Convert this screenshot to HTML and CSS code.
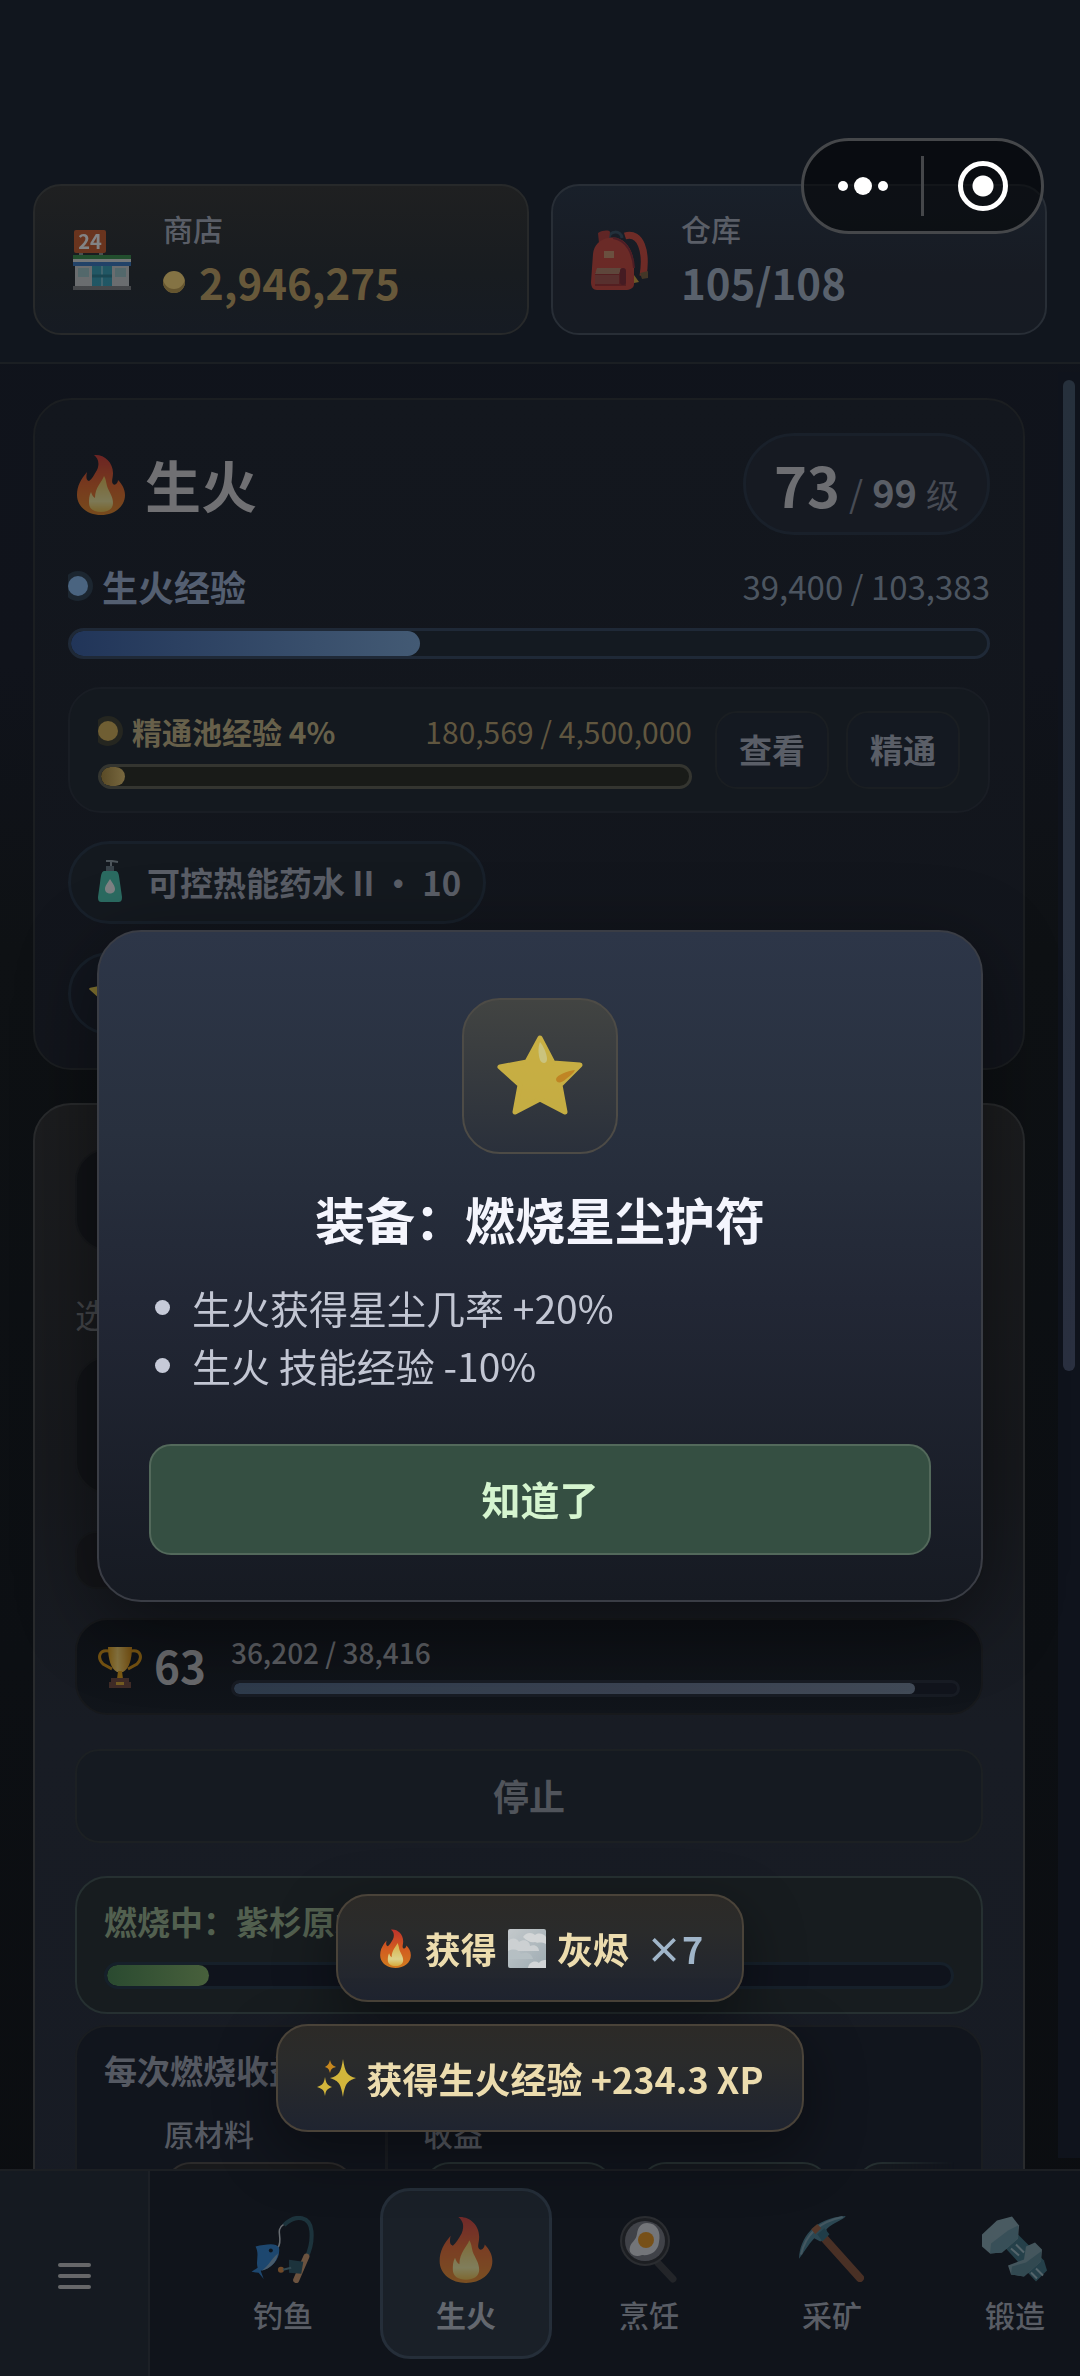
FILE: index.html
```html
<!DOCTYPE html>
<html lang="zh-CN">
<head>
<meta charset="utf-8">
<meta name="viewport" content="width=device-width, initial-scale=1">
<title>生火</title>
<link rel="stylesheet" href="styles.css">
</head>
<body>
<svg class="defs" aria-hidden="true">
  <defs>
    <linearGradient id="flame-fill" x1="0" y1="0" x2="0" y2="1">
      <stop offset="0" stop-color="#d8342c"/><stop offset=".5" stop-color="#f0651e"/><stop offset="1" stop-color="#f08a1c"/>
    </linearGradient>
    <linearGradient id="flame-core" x1="0" y1="0" x2="0" y2="1">
      <stop offset="0" stop-color="#f7c64a"/><stop offset=".7" stop-color="#fdf09a"/><stop offset="1" stop-color="#f8c23e"/>
    </linearGradient>
    <linearGradient id="cup-fill" x1="0" x2="1">
      <stop offset="0" stop-color="#e8a010"/><stop offset=".4" stop-color="#ffd66a"/><stop offset="1" stop-color="#d98a08"/>
    </linearGradient>
    <linearGradient id="cloud-sky" x1="0" y1="0" x2="1" y2="1">
      <stop offset="0" stop-color="#dfe5e8"/><stop offset="1" stop-color="#b4c3ca"/>
    </linearGradient>
    <symbol id="flame" viewBox="0 0 48 61">
      <path fill="url(#flame-fill)" d="M17 1C27 0 36 8 36 19C36 24 34 28 36 30C38 32 41 29 41 26C45 30 48 35 48 41C48 53 37 61 24 61C11 61 0 53 0 41C0 32 4 25 10 18C9 23 9 26 12 27C15 25 17 21 20 16C23 9 21 4 17 1Z"/>
      <path fill="url(#flame-core)" d="M27 22C25 28 18 33 18 44C16 43 15 41 14 38C12 42 12 45 12 49C12 55 17 58 24 58C31 58 36 55 36 49C36 42 32 38 30 32C29 28 29 25 27 22Z"/>
    </symbol>
    <symbol id="star" viewBox="0 0 86 82">
      <path fill="#f7d545" stroke="#f7d545" stroke-width="5" stroke-linejoin="round" d="M43 4L56 29L83 31L63 51L68 78L43 65L18 78L23 51L3 33L30 28Z"/>
      <path fill="#fbf094" d="M43 8C46 11 50 20 50 25C50 30 45 30 43 26C41 20 41 12 43 8Z"/>
      <path fill="#ee9f1c" d="M78 36C70 37 60 41 59 45C59 49 64 50 69 45C73 42 77 39 78 36Z"/>
    </symbol>
  </defs>
</svg>

<div class="app">
  <header class="topbar">
    <button class="stat stat-shop" type="button">
      <svg class="stat-icon" viewBox="0 0 58 60" aria-hidden="true">
        <path fill="#8c8c8c" d="M6 20h4v6H6zM26 20h4v6h-4z"/>
        <rect x="1" y="0" width="32" height="23" rx="2" fill="#c9501c"/>
        <text x="17" y="19" text-anchor="middle" class="shop-sign">24</text>
        <rect x="2" y="33" width="54" height="25" fill="#cfcfcf"/>
        <rect x="0" y="25" width="58" height="4" fill="#2c8a3d"/>
        <rect x="0" y="29" width="58" height="3" fill="#e4e4e4"/>
        <rect x="0" y="32" width="58" height="4" fill="#2f72c0"/>
        <rect x="5" y="38" width="11" height="9" fill="#9cc4c6"/><rect x="42" y="38" width="11" height="9" fill="#9cc4c6"/>
        <rect x="19" y="36" width="20" height="21" fill="#2c9fb8"/>
        <path stroke="#bfe3ea" stroke-width="1" d="M29 36v21"/>
        <path stroke="#1f7d8f" stroke-width="3" d="M19 46h20"/>
        <rect x="0" y="56" width="58" height="4" fill="#7c7c7c"/>
      </svg>
      <span class="stat-body">
        <span class="stat-label">商店</span>
        <span class="stat-value gold"><i class="coin"></i>2,946,275</span>
      </span>
    </button>
    <button class="stat stat-bag" type="button">
      <svg class="stat-icon" viewBox="0 0 58 60" aria-hidden="true">
        <path fill="none" stroke="#2f4755" stroke-width="3" d="M18 9C18 0 30 0 31 8"/>
        <path fill="none" stroke="#d83f2a" stroke-width="7" d="M34 6C50 1 56 22 52 46"/>
        <path fill="#b93024" d="M7 3C12 0 18 0 19 2L18 10L8 13Z"/>
        <path fill="#cf3b2a" d="M18 8C32 5 42 18 43 34L43 54C43 58 39 60 34 60L6 60C2 60 0 57 0 52L2 24C3 15 9 9 18 8Z"/>
        <path fill="none" stroke="#8f1f26" stroke-width="2" d="M22 8C36 10 42 24 43 38"/>
        <rect x="13" y="21" width="10" height="7" fill="#d08f60"/>
        <path fill="#9e2620" d="M4 42h31v14H4z"/><path fill="#b57c58" d="M6 38h24l-2 6H4z"/>
        <path fill="#a84a3c" d="M4 45h24v9H4z"/><rect x="29" y="38" width="6" height="17" rx="3" fill="#7d1b22"/>
        <path fill="#d9a52c" d="M43 45l5 7-5 1z"/><path fill="#7a5a2c" d="M49 43l8-2v7l-6 1z"/>
      </svg>
      <span class="stat-body">
        <span class="stat-label">仓库</span>
        <span class="stat-value">105/108</span>
      </span>
    </button>
  </header>

  <main class="content">
    <section class="card skill">
      <div class="skill-head">
        <h1 class="skill-title"><svg class="title-icon" aria-hidden="true"><use href="#flame"/></svg>生火</h1>
        <p class="level"><b class="level-now">73</b><span class="level-sep">/</span><b class="level-max">99</b><span class="level-unit">级</span></p>
      </div>
      <div class="xp">
        <div class="xp-row"><span class="xp-name"><i class="dot"></i>生火经验</span><span class="xp-num">39,400 / 103,383</span></div>
        <div class="bar bar-blue"><div class="fill" style="width:38.1%"></div></div>
      </div>
      <div class="pool">
        <div class="pool-main">
          <div class="pool-row"><span class="xp-name"><i class="dot"></i>精通池经验 4%</span><span>180,569 / 4,500,000</span></div>
          <div class="bar bar-gold"><div class="fill" style="width:4%"></div></div>
        </div>
        <div class="pool-actions">
          <button class="mini" type="button">查看</button>
          <button class="mini" type="button">精通</button>
        </div>
      </div>
      <div class="chip">
        <svg class="chip-icon" viewBox="0 0 24 43" aria-hidden="true">
          <path fill="none" stroke="#7d868c" stroke-width="2" d="M8 1h6l6 1M13 2v6"/>
          <rect x="8" y="6" width="8" height="6" fill="#56646c"/>
          <path fill="#3fae97" d="M6 11h12c3 1 3 5 4 12l2 14c0 4-1 5-4 5H4c-3 0-4-1-4-5l2-14c1-7 1-11 4-12z"/>
          <path fill="#d6d9d8" d="M12 19c3 5 5 7 5 10 0 6-10 6-10 0 0-3 2-5 5-10z"/>
        </svg>
        <span>可控热能药水 II • 10</span>
      </div>
      <div class="chip chip-star"><svg class="chip-star-icon" aria-hidden="true"><use href="#star"/></svg><span>燃烧星尘护符</span></div>
    </section>

    <section class="card burn">
      <div class="slot slot-tool"></div>
      <p class="field-label">选择</p>
      <div class="slot slot-log"></div>
      <div class="slot slot-note"></div>
      <div class="slot mastery">
        <svg class="trophy" viewBox="0 0 44 42" aria-hidden="true">
          <path fill="none" stroke="#d9920c" stroke-width="3" d="M11 5C1 3-1 12 5 18L14 23M33 5C43 3 45 12 39 18L30 23"/>
          <path fill="url(#cup-fill)" d="M10 1h24c0 12-3 22-9 25h-6C13 23 10 13 10 1z"/>
          <path fill="#e8a010" d="M20 25h4l1 8h-6z"/>
          <path fill="#6f4436" d="M13 32h18v4H13zM11 36h22v6H11z"/><path fill="#d9a52c" d="M18 36h8v3h-8z"/>
        </svg>
        <b class="mastery-level">63</b>
        <div class="mastery-main">
          <span class="mastery-xp">36,202 / 38,416</span>
          <div class="bar bar-slate"><div class="fill" style="width:94.2%"></div></div>
        </div>
      </div>
      <button class="stop" type="button">停止</button>
      <div class="burning">
        <p class="burning-title">燃烧中：紫杉原木</p>
        <div class="bar bar-green"><div class="fill" style="width:12.1%"></div></div>
      </div>
      <div class="yield">
        <p class="yield-title">每次燃烧收益</p>
        <div class="yield-cols">
          <div class="yield-in"><span>原材料</span><div class="yield-chips"><i class="ychip warm"></i></div></div>
          <div class="yield-out"><span>收益</span><div class="yield-chips faded"><i class="ychip"></i><i class="ychip"></i><i class="ychip"></i></div></div>
        </div>
      </div>
    </section>
    <div class="scroll-track"><div class="scroll-thumb"></div></div>
  </main>

  <nav class="tabs">
    <button class="menu" type="button" aria-label="菜单"><i></i><i></i><i></i></button>
    <div class="tab-list">
      <button class="tab" type="button">
        <svg viewBox="0 0 62 66" aria-hidden="true">
          <path fill="none" stroke="#d4dadd" stroke-width="1.5" d="M32 8C22 14 32 22 26 31"/>
          <path fill="none" stroke="#2c5a66" stroke-width="4" d="M32 9C44-3 58 1 59 15C60 26 58 33 54 41"/>
          <path fill="none" stroke="#dca06c" stroke-width="6" stroke-linecap="round" d="M54 40L44 63"/>
          <path fill="#2c5a66" d="M37 43l14 2-2 12-12-1z"/><circle cx="29" cy="53" r="3" fill="#e08b3c"/><path stroke="#5a8792" stroke-width="2" d="M31 53l8-2"/>
          <path fill="#2e86d6" d="M4 30C14 28 24 26 27 31C29 42 20 52 9 54L12 62L7 56L0 55L6 51C4 44 8 38 4 30Z"/>
          <path fill="#8fb4cf" d="M26 37C25 46 18 52 10 54C17 49 19 43 26 37Z"/><circle cx="19" cy="34" r="2" fill="#0c1a26"/>
        </svg>
        <span>钓鱼</span>
      </button>
      <button class="tab active" type="button">
        <svg aria-hidden="true"><use href="#flame"/></svg>
        <span>生火</span>
      </button>
      <button class="tab" type="button">
        <svg viewBox="0 0 58 67" aria-hidden="true">
          <path stroke="#3b3b3b" stroke-width="7" stroke-linecap="round" d="M38 47L53 63"/>
          <circle cx="25" cy="25" r="24" fill="#2c2c2c" stroke="#4c4c4c" stroke-width="2"/><circle cx="25" cy="25" r="20" fill="#7b7b80"/>
          <path fill="#ececec" d="M27 7C37 7 41 16 39 26C38 36 30 40 22 39C14 42 8 37 10 31C11 26 16 25 17 18C18 11 21 7 27 7Z"/>
          <circle cx="26" cy="24" r="8" fill="#f59a16"/>
        </svg>
        <span>烹饪</span>
      </button>
      <button class="tab" type="button">
        <svg viewBox="0 0 65 66" aria-hidden="true">
          <path stroke="#8f5233" stroke-width="8" stroke-linecap="round" d="M24 21L60 61"/>
          <path fill="#4d8596" d="M0 42C1 22 14 2 46 0C44 4 34 6 27 13L28 20L21 25L15 22C9 28 5 36 0 42Z"/>
          <path fill="none" stroke="#84a9b5" stroke-width="2" d="M2 38C6 20 18 6 43 1"/>
          <path fill="#a8633a" d="M12 13l6-5 4 4-6 6z"/><path fill="#35707f" d="M18 18l7-6 5 6-7 7z"/>
        </svg>
        <span>采矿</span>
      </button>
      <button class="tab" type="button">
        <svg viewBox="0 0 66 66" aria-hidden="true">
          <path fill="#3f7783" d="M22 30L36 18L62 44L65 54L54 65Z"/>
          <path fill="#8fb0b7" d="M0 18L15 4L30 0L37 9L36 22L20 36L8 37L0 30Z"/><path fill="#6a98a2" d="M9 27L26 14L36 9V22L20 36L8 37Z"/>
          <path stroke="#a7c6cc" stroke-width="2" d="M29 32l8 7M34 28l8 8M49 56l6 6M54 52l7 7"/>
          <path fill="#83a6ad" d="M44 30L53 26L60 33L59 45L42 60L29 58L26 49L42 43Z"/><path fill="#5c8a94" d="M30 50L44 46L59 35V45L42 60L29 58Z"/>
        </svg>
        <span>锻造</span>
      </button>
    </div>
  </nav>
</div>

<div class="overlay">
  <div class="modal" role="dialog" aria-modal="true" aria-labelledby="modal-title">
    <div class="modal-icon"><svg aria-hidden="true"><use href="#star"/></svg></div>
    <h2 id="modal-title">装备：燃烧星尘护符</h2>
    <ul>
      <li>生火获得星尘几率 +20%</li>
      <li>生火 技能经验 -10%</li>
    </ul>
    <button class="confirm" type="button">知道了</button>
  </div>
</div>

<div class="toasts" role="status">
  <div class="toast">
    <svg class="toast-flame" aria-hidden="true"><use href="#flame"/></svg>
    <span>获得</span>
    <svg class="toast-cloud" viewBox="0 0 38 39" aria-hidden="true">
      <rect width="38" height="39" rx="2" fill="url(#cloud-sky)"/>
      <path fill="#e9eef0" d="M0 12C4 8 9 9 11 13C16 9 22 12 22 17C27 15 31 18 31 22H0Z"/>
      <path fill="#cfdade" d="M0 22C6 19 11 21 13 25C19 22 24 25 25 30H0Z"/>
      <path fill="#f1f4f5" d="M15 8C18 3 24 3 27 6C31 3 36 5 38 8V15C32 12 30 15 27 13C23 14 19 12 15 8ZM20 39C21 33 27 31 31 34C33 31 36 31 38 31V39Z"/>
    </svg>
    <span>灰烬</span>
    <span class="toast-count">×7</span>
  </div>
  <div class="toast">
    <svg class="toast-spark" viewBox="0 0 39 38" aria-hidden="true">
      <path fill="#fdd93f" d="M26 0C28 13 30 17 39 19C30 22 28 25 26 38C24 25 22 22 13 19C22 17 24 13 26 0Z"/>
      <path fill="#fdd93f" d="M8 18C9 24 10 26 15 28C10 30 9 31 8 37C7 31 6 30 0 28C6 26 7 24 8 18Z"/>
      <path fill="#ee9f1c" d="M13 1C14 5 15 6 19 8C15 9 14 10 13 14C12 10 11 9 8 8C11 6 12 5 13 1Z"/>
    </svg>
    <span>获得生火经验 +234.3 XP</span>
  </div>
</div>

<div class="capsule">
  <button class="cap-btn" type="button" aria-label="更多"><i class="pt"></i><i class="pt big"></i><i class="pt"></i></button>
  <i class="cap-sep"></i>
  <button class="cap-btn" type="button" aria-label="关闭"><i class="ring"></i></button>
</div>
</body>
</html>
```
FILE: styles.css
```css
* { box-sizing: border-box; }

html, body { height: 100%; margin: 0; }

body {
  overflow: hidden;
  background: #0e1118;
  color: #5a5e67;
  font-family: "Noto Sans CJK SC", sans-serif;
  font-size: 33px;
  line-height: 46px;
}

button { margin: 0; padding: 0; border: 0; background: none; color: inherit; font: inherit; }
h1, h2, p, ul { margin: 0; padding: 0; }
svg, i { display: block; flex: none; }
.defs { position: absolute; width: 0; height: 0; }

.app {
  display: flex;
  flex-direction: column;
  height: 100vh;
  background: linear-gradient(#10141c 0, #10131b 28%, #0e1114 40%, #0c0f13 70%, #0b0d10 100%);
}

/* Top bar */
.topbar {
  display: flex;
  gap: 22px;
  padding: 184px 33px 27px;
  border-bottom: 2px solid #1b1f23;
  background: #11161e;
}
.stat {
  flex: 1;
  display: flex;
  align-items: center;
  gap: 32px;
  height: 151px;
  padding: 0 38px;
  border: 2px solid #27292a;
  border-radius: 28px;
  text-align: left;
}
.stat-shop { background: linear-gradient(#1f2021, #181c20 60%, #161b23); }
.stat-bag { border-color: #282e36; background: linear-gradient(#19202a, #171b23 60%, #161b23); }
.stat-icon { overflow: visible; width: 58px; height: 60px; opacity: .45; }
.shop-sign { fill: #fff; font: bold 20px "Noto Sans CJK SC", sans-serif; }
.stat-body { display: flex; flex-direction: column; gap: 4px; padding-bottom: 4px; }
.stat-label { font-size: 30px; font-weight: 500; line-height: 44px; }
.stat-value { display: flex; align-items: center; gap: 14px; color: #59616c; font-size: 42px; font-weight: 700; line-height: 56px; }
.gold { color: #67583a; }
.coin { width: 22px; height: 22px; border-radius: 50%; background: #847344; box-shadow: inset 0 -4px #65552f; }

/* Cards */
.content {
  position: relative;
  flex: 1;
  min-height: 0;
  display: flex;
  flex-direction: column;
  gap: 33px;
  overflow: hidden;
  padding: 34px 55px 0 33px;
}
.card { flex: none; display: flex; flex-direction: column; border: 2px solid #1b1e21; border-radius: 38px; }
.skill { gap: 28px; padding: 33px; background: linear-gradient(#13171e, #12151c); }
.skill-head { display: flex; align-items: center; justify-content: space-between; height: 102px; }
.skill-title { display: flex; align-items: center; gap: 20px; padding-left: 9px; color: #707073; font-size: 56px; line-height: 80px; }
.title-icon { width: 48px; height: 61px; opacity: .45; }
.level {
  display: flex;
  align-items: baseline;
  gap: 9px;
  height: 102px;
  padding: 8px 28px;
  border: 3px solid #19202a;
  border-radius: 51px;
  background: #161a22;
  color: #474b54;
  line-height: 80px;
}
.level-now { color: #6d6e72; font-size: 56px; }
.level-sep { font-size: 36px; }
.level-max { color: #5a5e66; font-size: 38px; }

.xp-row, .pool-row { display: flex; justify-content: space-between; }
.xp-row { margin-bottom: 19px; color: #4c5560; font-size: 36px; line-height: 46px; }
.xp-num { font-size: 33px; }
.xp-name { display: flex; align-items: center; gap: 14px; overflow-x: clip; color: #545f71; font-weight: 700; }
.dot { width: 20px; height: 20px; border-radius: 50%; background: #4a6480; box-shadow: 0 0 0 5px #1c2630; }
.bar { overflow: hidden; height: 31px; border: 3px solid #1f2937; border-radius: 16px; background: #141a21; }
.fill { height: 100%; border-radius: 16px; background: linear-gradient(90deg, #213559, #435a74); }

.pool {
  display: flex;
  gap: 23px;
  padding: 22px 28px;
  border: 2px solid #191d24;
  border-radius: 33px;
  background: #14191f;
}
.pool-main { flex: 1; }
.pool-row { margin-bottom: 13px; color: #60563f; font-size: 30px; line-height: 40px; }
.pool .xp-name { color: #67604a; }
.pool .dot { background: #6f5e33; box-shadow: 0 0 0 5px #252620; }
.bar-gold { height: 25px; border-color: #343530; background: #191b18; }
.bar-gold .fill { background: linear-gradient(90deg, #594a26, #78683f); }
.pool-actions { display: flex; gap: 17px; }
.mini { width: 114px; height: 78px; padding-bottom: 3px; border: 2px solid #1a1e22; border-radius: 22px; background: #141921; font-weight: 700; }

.chip {
  display: flex;
  align-items: center;
  align-self: flex-start;
  gap: 25px;
  height: 83px;
  padding: 0 22px 2px 27px;
  border: 3px solid #18202a;
  border-radius: 42px;
  background: #14191f;
  font-weight: 700;
}
.chip-icon { width: 24px; height: 43px; opacity: .55; }
.chip-star { padding-left: 18px; background: #12161e; }
.chip-star-icon { width: 44px; height: 42px; opacity: .5; }

.burn { padding: 43px 40px; border-color: #292b2d; background: linear-gradient(#1c1d1f 0, #17191d 360px, #181c24 620px, #171b24); }
.slot { border: 2px solid #17191c; border-radius: 33px; background: #111317; }
.slot-tool { height: 103px; margin-bottom: 38px; }
.field-label { margin-bottom: 17px; color: #45474b; line-height: 50px; }
.slot-log { height: 138px; margin-bottom: 37px; }
.slot-note { height: 58px; margin-bottom: 29px; border-radius: 22px; background: #141519; }
.mastery {
  display: flex;
  align-items: center;
  height: 97px;
  margin-bottom: 34px;
  padding: 0 21px;
  background: linear-gradient(#0d1015, #11151b);
}
.trophy { width: 44px; height: 42px; margin-right: 12px; opacity: .5; }
.mastery-level { margin: 0 25px 4px 0; color: #68696c; font-size: 44px; line-height: 56px; }
.mastery-main { flex: 1; }
.mastery-xp { display: block; margin-bottom: 12px; color: #5a5c60; font-size: 28px; font-weight: 500; line-height: 32px; }
.bar-slate { height: 17px; border-color: #181c24; background: #11141c; }
.bar-slate .fill { background: linear-gradient(90deg, #2e3b4c, #3b4352 60%, #424b58); }
.stop { height: 94px; margin-bottom: 33px; padding-bottom: 2px; border: 2px solid #1c2023; border-radius: 24px; background: #151a21; color: #50545b; font-size: 36px; font-weight: 700; }
.burning { margin-bottom: 11px; padding: 20px 27px 23px; border: 2px solid #263031; border-radius: 32px; background: #171c1f; }
.burning-title { margin-bottom: 18px; color: #52604f; font-weight: 700; }
.bar-green { height: 27px; border-color: #16202a; background: #0f131c; }
.bar-green .fill { background: linear-gradient(90deg, #2a4a30, #48603c); }
.yield { height: 400px; padding: 20px 27px; border: 2px solid #1a1d21; border-radius: 32px; background: #11151d; }
.yield-title { margin-bottom: 20px; color: #555962; font-weight: 700; }
.yield-cols { display: flex; color: #565a62; font-size: 30px; font-weight: 500; line-height: 40px; }
.yield-in { width: 284px; padding-left: 60px; border-right: 3px solid #1a1d22; }
.yield-out { flex: 1; min-width: 0; padding-left: 35px; }
.yield-chips { display: flex; gap: 25px; margin-top: 9px; overflow: hidden; }
.faded { -webkit-mask-image: linear-gradient(90deg, #000 85%, transparent); mask-image: linear-gradient(90deg, #000 85%, transparent); }
.ychip { width: 191px; height: 120px; border: 2px solid #263031; border-radius: 27px; background: #15191e; }
.warm { border-color: #2c2b2b; background: #18191b; }

.scroll-track { position: absolute; top: 8px; right: 0; bottom: 11px; width: 22px; padding: 8px 5px; background: #0f131c; }
.scroll-thumb { height: 56%; border-radius: 6px; background: linear-gradient(#26303c, #2a3040); }

/* Bottom tabs */
.tabs { flex: none; display: flex; height: 207px; border-top: 2px solid #1c1f23; background: #10141b; }
.menu { flex: none; display: flex; flex-direction: column; align-items: center; justify-content: center; gap: 7px; width: 150px; padding-top: 4px; border-right: 2px solid #1c2026; background: #151a21; }
.menu i { width: 33px; height: 4px; border-radius: 2px; background: #666769; }
.tab-list { flex: 1; display: flex; gap: 11px; overflow: hidden; padding: 17px 0 17px 47px; }
.tab { flex: none; display: flex; flex-direction: column; align-items: center; gap: 9px; width: 172px; padding-top: 25px; border: 3px solid transparent; border-radius: 30px; color: #595d65; font-size: 30px; font-weight: 500; line-height: 44px; }
.tab svg { width: 66px; height: 67px; opacity: .45; }
.tab.active { border-color: #252e39; background: #1a2028; color: #63676e; font-weight: 700; }

/* Dialog */
.overlay { position: fixed; inset: 0; display: flex; align-items: center; justify-content: center; padding: 156px 97px 0; }
.modal {
  display: flex;
  flex-direction: column;
  align-items: center;
  width: 100%;
  padding: 66px 50px 45px;
  border: 2px solid #3a3d45;
  border-radius: 44px;
  background: linear-gradient(#2d3648, #28303e 30%, #222735 55%, #161a22);
  box-shadow: 0 20px 80px rgba(0, 0, 0, .45);
}
.modal-icon { display: flex; align-items: center; justify-content: center; width: 156px; height: 156px; border: 2px solid #4d4b46; border-radius: 38px; background: linear-gradient(#424442, #2a303b); }
.modal-icon svg { width: 86px; height: 82px; margin-bottom: 3px; opacity: .75; }
.modal h2 { margin: 28px 0 24px; color: #f4f5fd; font-size: 50px; line-height: 72px; }
.modal ul { align-self: stretch; margin-bottom: 50px; list-style: none; color: #c2c6d3; font-size: 39px; line-height: 58px; }
.modal li { display: flex; align-items: center; gap: 22px; padding-left: 6px; }
.modal li::before { content: ""; width: 15px; height: 15px; border-radius: 50%; background: #c6cad8; }
.confirm { align-self: stretch; height: 111px; padding-bottom: 3px; border: 2px solid #53695b; border-radius: 22px; background: #354f42; color: #d5f5cf; font-size: 39px; font-weight: 700; }

/* Toasts */
.toasts { position: fixed; right: 0; bottom: 244px; left: 0; display: flex; flex-direction: column; align-items: center; gap: 22px; }
.toast {
  display: flex;
  align-items: center;
  gap: 11px;
  height: 108px;
  padding: 0 39px;
  border: 2px solid #4a4339;
  border-radius: 32px;
  background: linear-gradient(#2c2a27, #2a2b2b 35%, #1f2430);
  box-shadow: 0 20px 60px rgba(0, 0, 0, .4);
  color: #ecdcae;
  font-size: 36px;
  font-weight: 700;
}
.toast-flame { width: 31px; height: 39px; margin: 0 3px; opacity: .85; }
.toast-cloud { width: 38px; height: 39px; opacity: .85; }
.toast-spark { width: 39px; height: 38px; opacity: .8; }
.toast-count { margin-left: 6px; color: #a0b5c9; }

/* Host capsule */
.capsule { position: fixed; top: 138px; right: 36px; display: flex; align-items: center; width: 243px; height: 96px; border: 3px solid #45474a; border-radius: 48px; background: rgba(5, 7, 9, .6); }
.cap-btn { flex: 1; display: flex; align-items: center; justify-content: center; gap: 6px; }
.cap-sep { width: 3px; height: 60px; background: #45474a; }
.pt { width: 10px; height: 10px; border-radius: 50%; background: #fff; }
.big { width: 18px; height: 18px; }
.ring { width: 50px; height: 50px; border: 5px solid #fff; border-radius: 50%; background: radial-gradient(circle, #fff 10px, transparent 11px); }
```
